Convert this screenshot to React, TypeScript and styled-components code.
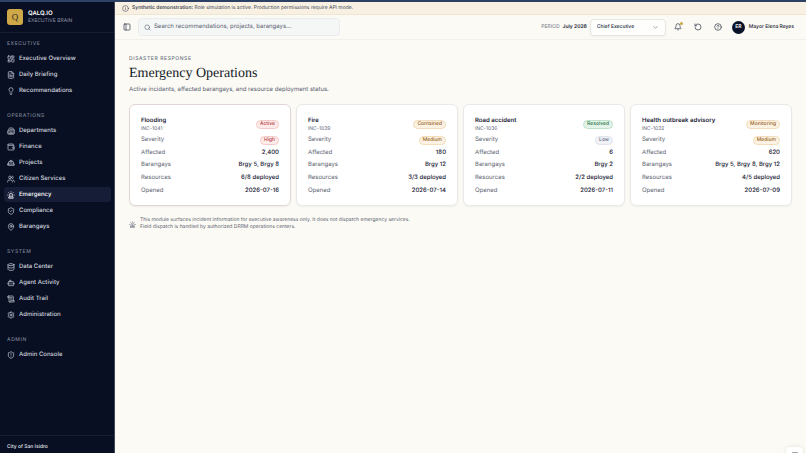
import React from "react";
import styled, { createGlobalStyle } from "styled-components";
import {
  Bell, Bot, ChevronDown, CircleHelp, Database, FileText, HardHat, Info, LayoutDashboard,
  Lightbulb, MapPin, PanelLeft, RotateCcw, ScrollText, Search, Settings, ShieldAlert, ShieldCheck,
  Siren, Users, Wallet, Building2, type LucideIcon,
} from "lucide-react";

const GlobalStyle = createGlobalStyle`
  * { box-sizing: border-box; }
  body { margin: 0; background: #fbfaf5; color: #182033; font-family: Inter, sans-serif; font-size: 6px; line-height: 10px; text-rendering: geometricPrecision; overflow: hidden; }
  button, input, select { font: inherit; color: inherit; }
  h1, h2, p, ul, dl, dd { margin: 0; padding: 0; }
  svg { flex-shrink: 0; }
`;

const Page = styled.div`
  display: flex;
  height: 100vh;
  border-top: 2px solid #2c4163;
  overflow: hidden;
`;
const Sidebar = styled.aside`
  display: flex;
  flex-direction: column;
  flex: 0 0 115px;
  background: #080f22;
  color: #d5d9e4;
  border-right: 1px solid #40465a;
`;
const Brand = styled.div`
  display: flex;
  align-items: center;
  gap: 5px;
  height: 31px;
  padding: 0 7px;
  border-bottom: 1px solid #171e31;
`;
const Logo = styled.span`
  display: grid;
  place-items: center;
  width: 16px;
  height: 16px;
  border-radius: 3px;
  background: #cfa847;
  color: #2b2a25;
  font: 9px "Liberation Serif", serif;
`;
const BrandName = styled.div`
  color: #fff;
  font-weight: 600;
  line-height: 8px;
`;
const BrandSub = styled.div`
  color: #8d93a5;
  font-size: 5px;
  line-height: 6px;
  white-space: nowrap;
`;
const Nav = styled.nav`
  flex: 1;
  padding: 6px 3px 0 4px;
`;
const NavSection = styled.section`
  padding-bottom: 13px;
`;
const NavTitle = styled.h2`
  padding: 0 3px;
  margin-bottom: 2px;
  height: 10px;
  color: #7d8396;
  font-size: 5px;
  font-weight: 500;
  letter-spacing: 0.12em;
  line-height: 10px;
`;
const NavList = styled.ul`
  display: grid;
  gap: 1px;
  list-style: none;
`;
const NavLink = styled.a<{ $active: boolean }>`
  display: flex;
  align-items: center;
  gap: 4px;
  height: 15px;
  padding: 0 3px;
  border-radius: 3px;
  background: ${(p) => (p.$active ? "#151d37" : "transparent")};
  color: ${(p) => (p.$active ? "#fff" : "#d0d4df")};
  font-weight: 500;
  text-decoration: none;
  white-space: nowrap;
`;
const SideFooter = styled.footer`
  height: 18px;
  padding-top: 6px;
  border-top: 1px solid #171e31;
  padding-left: 7px;
  color: #e0e3ea;
  font-size: 5px;
  font-weight: 500;
`;
const Main = styled.div`
  flex: 1;
  min-width: 0;
`;
const Banner = styled.div`
  display: flex;
  align-items: center;
  gap: 3px;
  height: 13px;
  padding: 0 7px;
  background: #f7f0e3;
  border-bottom: 1px solid #efe5d0;
  color: #454a55;
  font-size: 5px;
  b { font-weight: 600; }
`;
const Header = styled.header`
  display: flex;
  align-items: center;
  height: 25px;
  padding: 0 12px 0 8px;
  border-bottom: 1px solid #f1f0ed;
`;
const IconButton = styled.button`
  position: relative;
  display: grid;
  place-items: center;
  width: 8px;
  height: 10px;
  padding: 0;
  border: 0;
  background: none;
  color: #293142;
`;
const Dot = styled.span`
  position: absolute;
  top: 0;
  right: -1px;
  width: 3px;
  height: 3px;
  border-radius: 50%;
  background: #c9a53f;
`;
const SearchBox = styled.label`
  display: flex;
  align-items: center;
  gap: 3px;
  flex: 0 1 202px;
  height: 18px;
  margin-left: 7px;
  padding: 0 5px;
  border: 1px solid #e9ecef;
  border-radius: 4px;
  background: #f5f7f7;
  color: #576071;
`;
const SearchInput = styled.input`
  flex: 1;
  min-width: 0;
  padding: 0;
  border: 0;
  outline: 0;
  background: none;
  text-rendering: inherit;
  &::placeholder { color: #596171; opacity: 1; }
`;
const Tools = styled.div`
  display: flex;
  align-items: center;
  gap: 12px;
  margin-left: auto;
  font-size: 5px;
  white-space: nowrap;
`;
const PeriodGroup = styled.div`
  display: flex;
  align-items: center;
  gap: 3px;
`;
const Period = styled.span`
  color: #70757f;
`;
const PeriodValue = styled.span`
  font-weight: 600;
`;
const SelectWrap = styled.div`
  display: flex;
  align-items: center;
  width: 76px;
  height: 17px;
  margin-right: -4px;
  padding: 0 6px;
  border: 1px solid #e6e6e4;
  border-radius: 4px;
  background: #fefefc;
  box-shadow: 0 1px 2px #0000000c;
  color: #687080;
`;
const RoleSelect = styled.select`
  flex: 1;
  min-width: 0;
  padding: 0;
  border: 0;
  appearance: none;
  background: none;
  color: #252d3c;
  font-weight: 500;
  text-rendering: inherit;
`;
const User = styled.div`
  display: flex;
  align-items: center;
  gap: 4px;
  font-weight: 500;
  margin-left: -2px;
`;
const Avatar = styled.span`
  display: grid;
  place-items: center;
  width: 13px;
  height: 13px;
  border-radius: 50%;
  background: #0a1429;
  color: #fff;
  font-weight: 600;
`;
const Content = styled.main`
  padding: 14px;
`;
const Eyebrow = styled.p`
  color: #697181;
  font-size: 5px;
  font-weight: 500;
  letter-spacing: 0.12em;
`;
const Title = styled.h1`
  color: #121827;
  font: 14px/20px "Liberation Serif", serif;
`;
const Subtitle = styled.p`
  margin-top: 1px;
  color: #596171;
`;
const Cards = styled.div`
  display: grid;
  grid-template-columns: repeat(4, minmax(0, 1fr));
  gap: 5px;
  margin-top: 9px;
`;
const Card = styled.article<{ $alert: boolean }>`
  padding: 11px 11px 8px;
  border: 1px solid ${(p) => (p.$alert ? "#e3d4d5" : "#e9e9e8")};
  border-radius: 6px;
  background: #fff;
  box-shadow: 0 1px 2px #0000000d;
`;
const CardHead = styled.div`
  display: flex;
  align-items: center;
  justify-content: space-between;
  margin-bottom: 2px;
`;
const CardTitle = styled.h2`
  font-size: 6px;
  font-weight: 600;
  line-height: 10px;
`;
const CardId = styled.p`
  color: #626a78;
  font-size: 5px;
  line-height: 6px;
`;
const Fields = styled.dl`
  display: grid;
  grid-auto-rows: 1fr;
  height: 63px;
`;
const Field = styled.div`
  display: flex;
  align-items: center;
  justify-content: space-between;
  dt { color: #5d6471; }
  dd { font-weight: 500; white-space: nowrap; }
`;
const tones = {
  red: ["#fdebea", "#f5c9c7", "#b63e3e"],
  amber: ["#fcf2e3", "#f3dcba", "#986226"],
  green: ["#e4f4ea", "#bfe2ca", "#2c7548"],
  gray: ["#eff1f6", "#e2e5ed", "#626a7b"],
};
type Tone = keyof typeof tones;
const Badge = styled.span<{ $tone: Tone }>`
  display: block;
  padding: 0 3px;
  border: 1px solid ${(p) => tones[p.$tone][1]};
  border-radius: 5px;
  background: ${(p) => tones[p.$tone][0]};
  color: ${(p) => tones[p.$tone][2]};
  font-size: 5px;
  font-weight: 500;
  line-height: 7px;
`;
const Note = styled.div`
  display: flex;
  align-items: center;
  gap: 4px;
  margin-top: 11px;
  color: #5d6471;
  font-size: 5px;
  line-height: 7px;
`;
const FloatingButton = styled.button`
  position: fixed;
  right: 3px;
  bottom: -12px;
  display: flex;
  justify-content: center;
  width: 17px;
  height: 18px;
  padding: 5px 0 0;
  border: 0;
  border-radius: 4px;
  background: #fff;
  box-shadow: 0 0 4px #0000001c;
  span { width: 6px; height: 1px; background: #aaa; }
`;

const sections: { title: string; items: [string, LucideIcon][] }[] = [
  { title: "EXECUTIVE", items: [["Executive Overview", LayoutDashboard], ["Daily Briefing", FileText], ["Recommendations", Lightbulb]] },
  { title: "OPERATIONS", items: [["Departments", Building2], ["Finance", Wallet], ["Projects", HardHat], ["Citizen Services", Users], ["Emergency", Siren], ["Compliance", ShieldCheck], ["Barangays", MapPin]] },
  { title: "SYSTEM", items: [["Data Center", Database], ["Agent Activity", Bot], ["Audit Trail", ScrollText], ["Administration", Settings]] },
  { title: "ADMIN", items: [["Admin Console", ShieldAlert]] },
];

interface Incident {
  name: string; id: string; status: string; statusTone: Tone; severity: string; severityTone: Tone;
  affected: string; barangays: string; resources: string; opened: string;
}
const incidents: Incident[] = [
  { name: "Flooding", id: "INC-1041", status: "Active", statusTone: "red", severity: "High", severityTone: "red", affected: "2,400", barangays: "Brgy 5, Brgy 8", resources: "6/8 deployed", opened: "2026-07-16" },
  { name: "Fire", id: "INC-1039", status: "Contained", statusTone: "amber", severity: "Medium", severityTone: "amber", affected: "180", barangays: "Brgy 12", resources: "3/3 deployed", opened: "2026-07-14" },
  { name: "Road accident", id: "INC-1036", status: "Resolved", statusTone: "green", severity: "Low", severityTone: "gray", affected: "6", barangays: "Brgy 2", resources: "2/2 deployed", opened: "2026-07-11" },
  { name: "Health outbreak advisory", id: "INC-1032", status: "Monitoring", statusTone: "amber", severity: "Medium", severityTone: "amber", affected: "620", barangays: "Brgy 5, Brgy 8, Brgy 12", resources: "4/5 deployed", opened: "2026-07-09" },
];

export default function App() {
  return (
    <Page>
      <GlobalStyle />
      <Sidebar>
        <Brand>
          <Logo>Q</Logo>
          <div>
            <BrandName>QALQ.IO</BrandName>
            <BrandSub>EXECUTIVE BRAIN</BrandSub>
          </div>
        </Brand>
        <Nav>
          {sections.map((s) => (
            <NavSection key={s.title}>
              <NavTitle>{s.title}</NavTitle>
              <NavList>
                {s.items.map(([label, Icon]) => (
                  <li key={label}>
                    <NavLink href="#" $active={label === "Emergency"}>
                      <Icon size={8} />
                      {label}
                    </NavLink>
                  </li>
                ))}
              </NavList>
            </NavSection>
          ))}
        </Nav>
        <SideFooter>City of San Isidro</SideFooter>
      </Sidebar>
      <Main>
        <Banner>
          <Info size={7} />
          <span><b>Synthetic demonstration:</b> Role simulation is active. Production permissions require API mode.</span>
        </Banner>
        <Header>
          <IconButton aria-label="Toggle sidebar"><PanelLeft size={8} /></IconButton>
          <SearchBox>
            <Search size={7} />
            <SearchInput aria-label="Search" placeholder="Search recommendations, projects, barangays..." />
          </SearchBox>
          <Tools>
            <PeriodGroup>
              <Period>PERIOD</Period>
              <PeriodValue>July 2026</PeriodValue>
              <SelectWrap>
                <RoleSelect aria-label="Role"><option>Chief Executive</option></RoleSelect>
                <ChevronDown size={7} />
              </SelectWrap>
            </PeriodGroup>
            <IconButton aria-label="Notifications"><Bell size={8} /><Dot /></IconButton>
            <IconButton aria-label="Reset"><RotateCcw size={8} /></IconButton>
            <IconButton aria-label="Help"><CircleHelp size={8} /></IconButton>
            <User><Avatar>ER</Avatar>Mayor Elena Reyes</User>
          </Tools>
        </Header>
        <Content>
          <Eyebrow>DISASTER RESPONSE</Eyebrow>
          <Title>Emergency Operations</Title>
          <Subtitle>Active incidents, affected barangays, and resource deployment status.</Subtitle>
          <Cards>
            {incidents.map((i) => (
              <Card key={i.id} $alert={i.status === "Active"}>
                <CardHead>
                  <div>
                    <CardTitle>{i.name}</CardTitle>
                    <CardId>{i.id}</CardId>
                  </div>
                  <Badge $tone={i.statusTone}>{i.status}</Badge>
                </CardHead>
                <Fields>
                  <Field><dt>Severity</dt><dd><Badge $tone={i.severityTone}>{i.severity}</Badge></dd></Field>
                  <Field><dt>Affected</dt><dd>{i.affected}</dd></Field>
                  <Field><dt>Barangays</dt><dd>{i.barangays}</dd></Field>
                  <Field><dt>Resources</dt><dd>{i.resources}</dd></Field>
                  <Field><dt>Opened</dt><dd>{i.opened}</dd></Field>
                </Fields>
              </Card>
            ))}
          </Cards>
          <Note>
            <Siren size={7} />
            <p>
              This module surfaces incident information for executive awareness only. It does not dispatch emergency services.
              <br />
              Field dispatch is handled by authorized DRRM operations centers.
            </p>
          </Note>
        </Content>
      </Main>
      <FloatingButton aria-label="Open panel"><span /></FloatingButton>
    </Page>
  );
}
